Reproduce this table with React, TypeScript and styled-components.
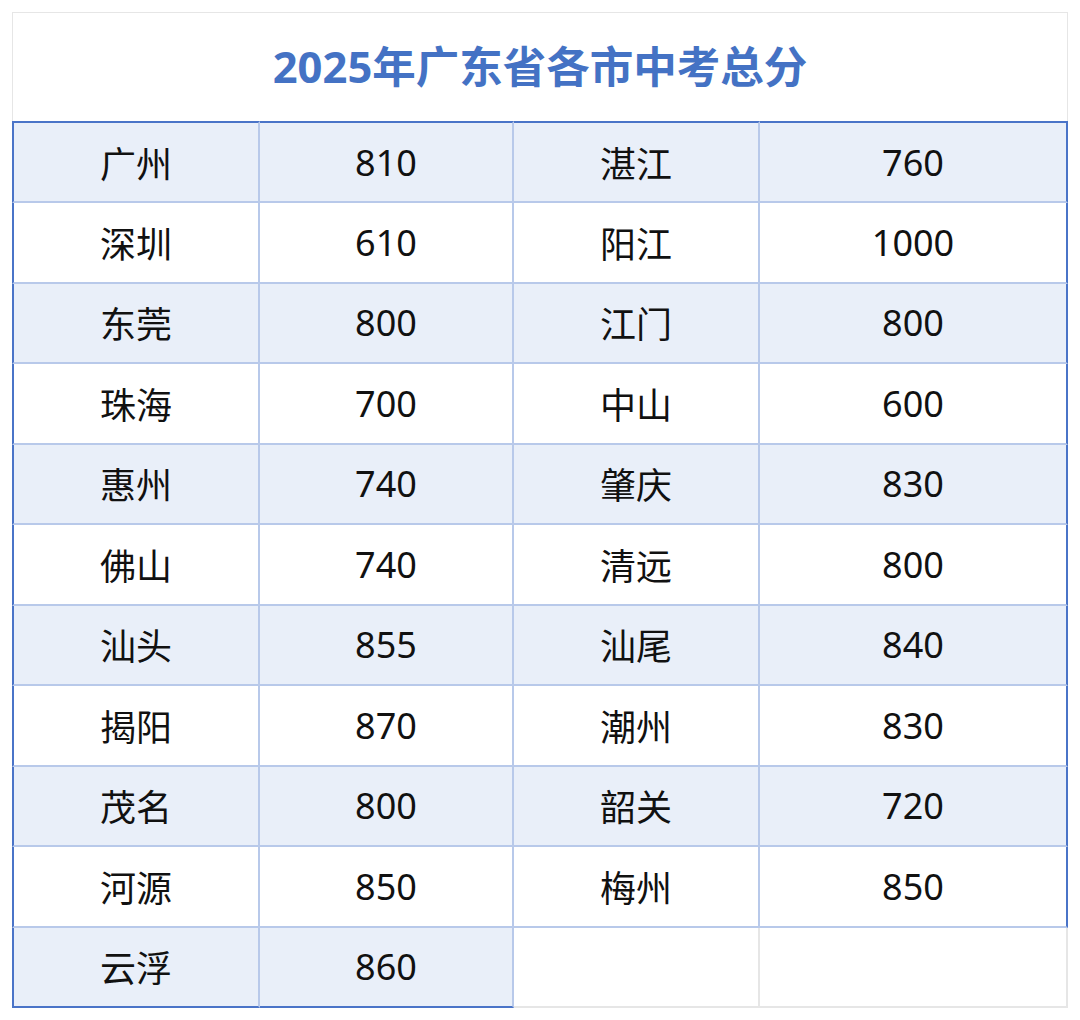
import styled, { createGlobalStyle } from "styled-components";

const GlobalStyle = createGlobalStyle`
  html, body {
    margin: 0;
    padding: 0;
    background: #ffffff;
  }
  body {
    font-family: "Noto Sans", "Noto Sans CJK SC", sans-serif;
  }
`;

const rows: [string, string, string, string][] = [
  ["广州", "810", "湛江", "760"],
  ["深圳", "610", "阳江", "1000"],
  ["东莞", "800", "江门", "800"],
  ["珠海", "700", "中山", "600"],
  ["惠州", "740", "肇庆", "830"],
  ["佛山", "740", "清远", "800"],
  ["汕头", "855", "汕尾", "840"],
  ["揭阳", "870", "潮州", "830"],
  ["茂名", "800", "韶关", "720"],
  ["河源", "850", "梅州", "850"],
  ["云浮", "860", "", ""],
];

const BLUE = "#4a74c8";
const INNER = "#b8c9ea";
const GREY = "#e6e6e6";

const Frame = styled.div`
  width: 1056px;
  margin: 12px 0 0 12px;
`;

const Title = styled.h1`
  box-sizing: border-box;
  height: 109px;
  margin: 0;
  border: 1px solid ${GREY};
  border-bottom: none;
  display: flex;
  align-items: center;
  justify-content: center;
  padding-bottom: 6px;
  font-size: 43.5px;
  font-weight: 700;
  color: #4472c4;
`;

const Grid = styled.div`
  display: grid;
  grid-template-columns: 248px 254px 246px 308px;
`;

interface CellProps {
  $striped: boolean;
  $first: boolean;
  $top: boolean;
  $last: boolean;
  $bottom: boolean;
  $empty: boolean;
}

const Cell = styled.div<CellProps>`
  box-sizing: border-box;
  height: ${(p) => (p.$top ? 82 : 80.5)}px;
  display: flex;
  align-items: center;
  justify-content: center;
  font-size: 36px;
  color: #111111;
  background: ${(p) => (p.$empty ? "#ffffff" : p.$striped ? "#e9eff9" : "#ffffff")};
  border-top: ${(p) => (p.$top ? `2px solid ${BLUE}` : "none")};
  border-left: ${(p) => (p.$first ? `2px solid ${BLUE}` : "none")};
  border-right: 2px solid
    ${(p) => (p.$empty ? GREY : p.$last ? BLUE : INNER)};
  border-bottom: 2px solid
    ${(p) => (p.$empty ? GREY : p.$bottom ? BLUE : INNER)};
`;

export default function App() {
  return (
    <>
      <GlobalStyle />
      <Frame>
        <Title>2025年广东省各市中考总分</Title>
        <Grid>
          {rows.map((row, r) =>
            row.map((text, c) => {
              const empty = text === "";
              const isLastRow = r === rows.length - 1;
              return (
                <Cell
                  key={`${r}-${c}`}
                  $striped={r % 2 === 0}
                  $first={c === 0}
                  $top={r === 0}
                  $last={c === 3}
                  $bottom={isLastRow && c < 2}
                  $empty={empty}
                >
                  {text}
                </Cell>
              );
            })
          )}
        </Grid>
      </Frame>
    </>
  );
}
